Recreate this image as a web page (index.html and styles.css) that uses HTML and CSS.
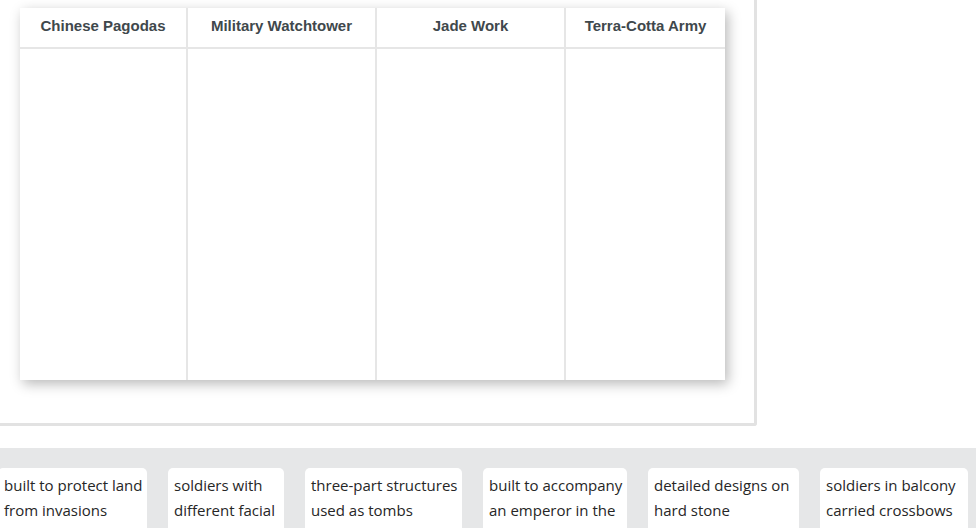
FILE: index.html
```html
<!DOCTYPE html>
<html lang="en">
<head>
    <meta charset="UTF-8">
    <meta name="viewport" content="width=device-width, initial-scale=1.0">
    <title>Sort the Items</title>
    <link rel="stylesheet" href="styles.css">
</head>
<body>
    <div class="panel">
        <div class="sort-table">
            <div class="col">
                <div class="col-head">Chinese Pagodas</div>
                <div class="col-body"></div>
            </div>
            <div class="col">
                <div class="col-head">Military Watchtower</div>
                <div class="col-body"></div>
            </div>
            <div class="col">
                <div class="col-head">Jade Work</div>
                <div class="col-body"></div>
            </div>
            <div class="col">
                <div class="col-head">Terra-Cotta Army</div>
                <div class="col-body"></div>
            </div>
        </div>
    </div>

    <div class="bank">
        <div class="bank-row">
            <div class="tile">built to protect land from invasions</div>
            <div class="tile">soldiers with different facial expressions</div>
            <div class="tile">three-part structures used as tombs</div>
            <div class="tile">built to accompany an emperor in the afterlife</div>
            <div class="tile">detailed designs on hard stone</div>
            <div class="tile">soldiers in balcony carried crossbows</div>
        </div>
    </div>
</body>
</html>
```

FILE: styles.css
```css
body {
    margin: 0;
    padding: 0;
    background: #fff;
    font-family: 'Open Sans', sans-serif;
    overflow: hidden;
    height: 528px;
}

.panel {
    width: 734px;
    padding: 8px 0 43px 20px;
    border-right: 3px solid #e2e2e2;
    border-bottom: 3px solid #e2e2e2;
    border-bottom-right-radius: 3px;
    background: #fff;
}

.sort-table {
    display: grid;
    grid-template-columns: 166px 189px 189px 161px;
    width: 705px;
    background: #fff;
    box-shadow: 3px 4px 12px rgba(0, 0, 0, 0.28);
}

.col {
    display: flex;
    flex-direction: column;
    border-left: 2px solid #e6e6e6;
}

.col:first-child {
    border-left: none;
}

.col-head {
    height: 39px;
    border-bottom: 2px solid #e6e6e6;
    font-family: 'Liberation Sans', Arial, sans-serif;
    font-weight: bold;
    font-size: 15px;
    color: #40484c;
    text-align: center;
    line-height: 35px;
}

.col-body {
    height: 331px;
}

.bank {
    margin-top: 22px;
    background: #e6e7e8;
    padding-top: 20px;
    height: 60px;
    overflow: hidden;
}

.bank-row {
    display: flex;
    gap: 21px;
    margin-left: -2px;
}

.tile {
    flex: none;
    box-sizing: border-box;
    background: #fff;
    border-radius: 5px;
    padding: 5px 1px 0 6px;
    height: 70px;
    font-size: 15px;
    line-height: 25px;
    color: #262626;
}

.tile:nth-child(1) { width: 149px; }
.tile:nth-child(2) { width: 116px; }
.tile:nth-child(3) { width: 157px; }
.tile:nth-child(4) { width: 144px; }
.tile:nth-child(5) { width: 151px; }
.tile:nth-child(6) { width: 148px; }
```
